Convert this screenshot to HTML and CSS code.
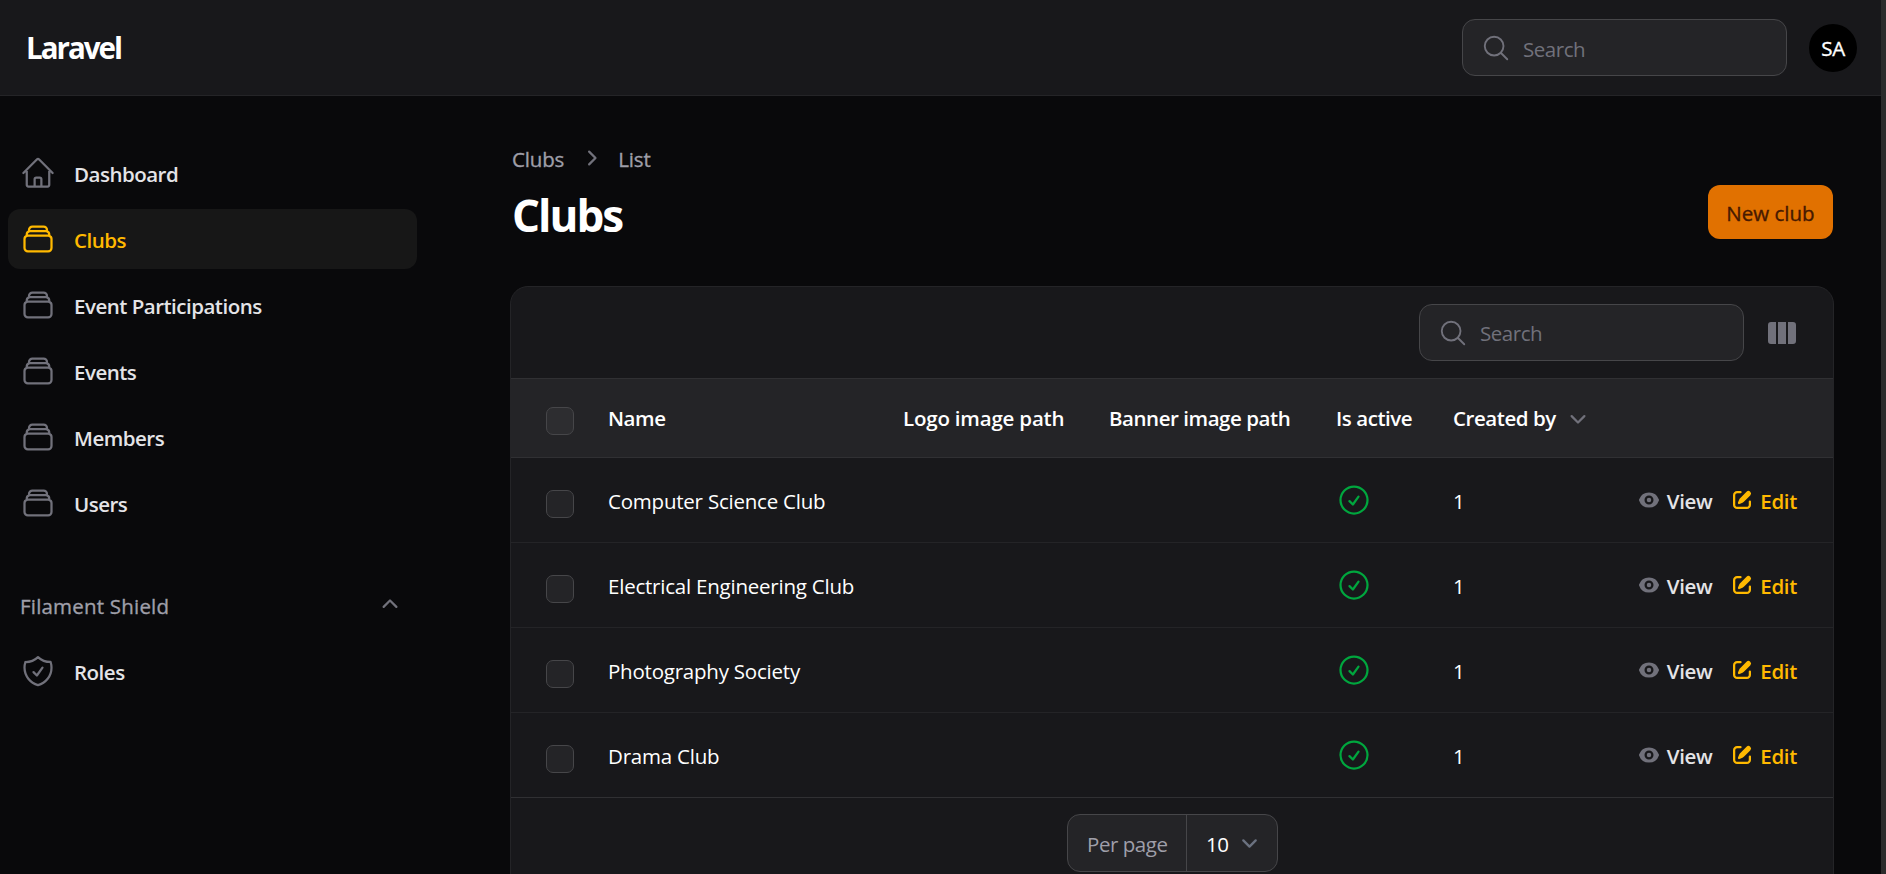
FILE: index.html
```html
<!DOCTYPE html>
<html lang="en">
<head>
<meta charset="utf-8">
<title>Clubs - Laravel</title>
<link rel="stylesheet" href="styles.css">
</head>
<body>
<svg class="sprite" aria-hidden="true">
  <symbol id="stack" viewBox="0 0 24 24"><path d="M6 6.878V6a2.25 2.25 0 0 1 2.25-2.25h7.5A2.25 2.25 0 0 1 18 6v.878m-12 0c.235-.083.487-.128.75-.128h10.5c.263 0 .515.045.75.128m-12 0A2.25 2.25 0 0 0 4.5 9v.878m13.5-3A2.25 2.25 0 0 1 19.5 9v.878m0 0a2.246 2.246 0 0 0-.75-.128H5.25c-.263 0-.515.045-.75.128m15 0A2.25 2.25 0 0 1 21 12v6a2.25 2.25 0 0 1-2.25 2.25H5.25A2.25 2.25 0 0 1 3 18v-6c0-.98.626-1.813 1.5-2.122"/></symbol>
  <symbol id="home" viewBox="0 0 24 24"><path d="m2.25 12 8.954-8.955c.44-.439 1.152-.439 1.591 0L21.75 12M4.5 9.75v10.125c0 .621.504 1.125 1.125 1.125H9.75v-4.875c0-.621.504-1.125 1.125-1.125h2.25c.621 0 1.125.504 1.125 1.125V21h4.125c.621 0 1.125-.504 1.125-1.125V9.75M8.25 21h8.25"/></symbol>
  <symbol id="shield" viewBox="0 0 24 24"><path d="M9 12.75 11.25 15 15 9.75m-3-7.036A11.959 11.959 0 0 1 3.598 6 11.99 11.99 0 0 0 3 9.749c0 5.592 3.824 10.29 9 11.623 5.176-1.332 9-6.03 9-11.622 0-1.31-.21-2.571-.598-3.751h-.152c-3.196 0-6.1-1.248-8.25-3.285Z"/></symbol>
  <symbol id="glass" viewBox="0 0 24 24"><path d="m21 21-5.197-5.197m0 0A7.5 7.5 0 1 0 5.196 5.196a7.5 7.5 0 0 0 10.607 10.607Z"/></symbol>
  <symbol id="check" viewBox="0 0 24 24"><path d="M9 12.75 11.25 15 15 9.75M21 12a9 9 0 1 1-18 0 9 9 0 0 1 18 0Z"/></symbol>
  <symbol id="up" viewBox="0 0 20 20"><path d="M9.47 6.47a.75.75 0 0 1 1.06 0l4.25 4.25a.75.75 0 1 1-1.06 1.06L10 8.06l-3.72 3.72a.75.75 0 0 1-1.06-1.06l4.25-4.25Z"/></symbol>
  <symbol id="right" viewBox="0 0 20 20"><path d="M8.22 5.22a.75.75 0 0 1 1.06 0l4.25 4.25a.75.75 0 0 1 0 1.06l-4.25 4.25a.75.75 0 0 1-1.06-1.06L11.94 10 8.22 6.28a.75.75 0 0 1 0-1.06Z"/></symbol>
  <symbol id="down" viewBox="0 0 20 20"><path d="M5.22 8.22a.75.75 0 0 1 1.06 0L10 11.94l3.72-3.72a.75.75 0 1 1 1.06 1.06l-4.25 4.25a.75.75 0 0 1-1.06 0L5.22 9.28a.75.75 0 0 1 0-1.06Z"/></symbol>
  <symbol id="eye" viewBox="0 0 16 16"><path d="M8 9.5a1.5 1.5 0 1 0 0-3 1.5 1.5 0 0 0 0 3Z"/><path fill-rule="evenodd" d="M1.38 8.28a.87.87 0 0 1 0-.566 7.003 7.003 0 0 1 13.238.006.87.87 0 0 1 0 .566A7.003 7.003 0 0 1 1.379 8.28ZM11 8a3 3 0 1 1-6 0 3 3 0 0 1 6 0Z"/></symbol>
  <symbol id="pencil" viewBox="0 0 16 16"><path d="M13.488 2.513a1.75 1.75 0 0 0-2.475 0L6.75 6.774a2.75 2.75 0 0 0-.596.892l-.848 2.047a.75.75 0 0 0 .98.98l2.047-.848a2.75 2.75 0 0 0 .892-.596l4.261-4.262a1.75 1.75 0 0 0 0-2.474Z"/><path d="M4.75 3.5c-.69 0-1.25.56-1.25 1.25v6.5c0 .69.56 1.25 1.25 1.25h6.5c.69 0 1.25-.56 1.25-1.25V9A.75.75 0 0 1 14 9v2.25A2.75 2.75 0 0 1 11.25 14h-6.5A2.75 2.75 0 0 1 2 11.25v-6.5A2.75 2.75 0 0 1 4.75 2H7a.75.75 0 0 1 0 1.5H4.75Z"/></symbol>
</svg>
<div class="app">
  <div class="page">
    <header class="topbar">
      <div class="brand">Laravel</div>
      <div class="search"><svg class="line i30"><use href="#glass"/></svg><span class="t placeholder">Search</span></div>
      <div class="avatar"><span class="t">SA</span></div>
    </header>
    <div class="body">
      <nav class="sidebar">
        <ul class="group">
          <li class="item"><svg class="line i36"><use href="#home"/></svg><span class="t">Dashboard</span></li>
          <li class="item active"><svg class="line i36"><use href="#stack"/></svg><span class="t">Clubs</span></li>
          <li class="item"><svg class="line i36"><use href="#stack"/></svg><span class="t">Event Participations</span></li>
          <li class="item"><svg class="line i36"><use href="#stack"/></svg><span class="t">Events</span></li>
          <li class="item"><svg class="line i36"><use href="#stack"/></svg><span class="t">Members</span></li>
          <li class="item"><svg class="line i36"><use href="#stack"/></svg><span class="t">Users</span></li>
        </ul>
        <ul class="group">
          <li class="label"><span class="t">Filament Shield</span><svg class="solid i30"><use href="#up"/></svg></li>
          <li class="item"><svg class="line i36"><use href="#shield"/></svg><span class="t">Roles</span></li>
        </ul>
      </nav>
      <main class="main">
        <div class="heading">
          <div>
            <div class="crumbs"><span class="t">Clubs</span><svg class="solid i30"><use href="#right"/></svg><span class="t">List</span></div>
            <h1>Clubs</h1>
          </div>
          <button class="new"><span class="t">New club</span></button>
        </div>
        <section class="card">
          <div class="tools">
            <div class="search"><svg class="line i30"><use href="#glass"/></svg><span class="t placeholder">Search</span></div>
            <svg class="columns" viewBox="0 0 28 22"><path d="M3 0H8V22H3A3 3 0 0 1 0 19V3A3 3 0 0 1 3 0ZM10 0H18V22H10ZM20 0H25A3 3 0 0 1 28 3V19A3 3 0 0 1 25 22H20Z"/></svg>
          </div>
          <table>
            <colgroup><col class="c-check"><col class="c-name"><col class="c-logo"><col class="c-banner"><col class="c-active"><col class="c-by"><col></colgroup>
            <thead>
              <tr><th><i class="box"></i></th><th><span class="t">Name</span></th><th class="logo"><span class="t">Logo image path</span></th><th><span class="t">Banner image path</span></th><th><span class="t">Is active</span></th><th><div class="sort"><span class="t">Created by</span><svg class="solid i30"><use href="#down"/></svg></div></th><th></th></tr>
            </thead>
            <tbody>
              <tr><td><i class="box"></i></td><td><span class="t">Computer Science Club</span></td><td></td><td></td><td><svg class="line i36 ok"><use href="#check"/></svg></td><td><span class="t">1</span></td><td><div class="actions"><a class="view"><svg class="solid i24"><use href="#eye"/></svg><span class="t">View</span></a><a class="edit"><svg class="solid i24"><use href="#pencil"/></svg><span class="t">Edit</span></a></div></td></tr>
              <tr><td><i class="box"></i></td><td><span class="t">Electrical Engineering Club</span></td><td></td><td></td><td><svg class="line i36 ok"><use href="#check"/></svg></td><td><span class="t">1</span></td><td><div class="actions"><a class="view"><svg class="solid i24"><use href="#eye"/></svg><span class="t">View</span></a><a class="edit"><svg class="solid i24"><use href="#pencil"/></svg><span class="t">Edit</span></a></div></td></tr>
              <tr><td><i class="box"></i></td><td><span class="t">Photography Society</span></td><td></td><td></td><td><svg class="line i36 ok"><use href="#check"/></svg></td><td><span class="t">1</span></td><td><div class="actions"><a class="view"><svg class="solid i24"><use href="#eye"/></svg><span class="t">View</span></a><a class="edit"><svg class="solid i24"><use href="#pencil"/></svg><span class="t">Edit</span></a></div></td></tr>
              <tr><td><i class="box"></i></td><td><span class="t">Drama Club</span></td><td></td><td></td><td><svg class="line i36 ok"><use href="#check"/></svg></td><td><span class="t">1</span></td><td><div class="actions"><a class="view"><svg class="solid i24"><use href="#eye"/></svg><span class="t">View</span></a><a class="edit"><svg class="solid i24"><use href="#pencil"/></svg><span class="t">Edit</span></a></div></td></tr>
            </tbody>
          </table>
          <div class="foot">
            <div class="perpage"><span class="t per">Per page</span><div class="num"><span class="t">10</span><svg class="caret" viewBox="0 0 20 20"><path d="m6 8 4 4 4-4"/></svg></div></div>
          </div>
        </section>
      </main>
    </div>
  </div>
  <div class="scrollbar"></div>
</div>
</body>
</html>
```
FILE: styles.css
```css
* { box-sizing: border-box; }
body { margin: 0; background: #09090b; color: #fff; font: 400 20.5px/30px "Open Sans", "Noto Sans", sans-serif; letter-spacing: -0.45px; overflow: hidden; }
ul { list-style: none; margin: 0; padding: 0; }
svg { display: block; flex: none; }
.sprite { position: absolute; width: 0; height: 0; }
.t { display: block; padding-top: 2px; white-space: nowrap; }
.line { fill: none; stroke: currentColor; stroke-width: 1.5; stroke-linecap: round; stroke-linejoin: round; color: #71717b; }
.solid { fill: #71717b; }
.i24 { width: 24px; height: 24px; }
.i30 { width: 30px; height: 30px; }
.i36 { width: 36px; height: 36px; }

.app { display: flex; height: 874px; overflow: hidden; }
.page { flex: 1; min-width: 0; }
.scrollbar { width: 5px; background: #2c2c2c; }

.topbar { display: flex; align-items: center; height: 96px; padding: 0 24px 0 26px; background: #18181b; border-bottom: 1px solid #242427; }
.brand { flex: 1; font-size: 29.5px; font-weight: 700; letter-spacing: -2px; padding-top: 1px; }
.search { display: flex; align-items: center; gap: 12px; width: 325px; height: 57px; padding-left: 18px; border: 1px solid #464649; border-radius: 13px; background: #242427; }
.placeholder { color: #71717b; }
.topbar .search { margin-right: 22px; }
.topbar .placeholder { padding-top: 3px; }
.avatar { display: flex; align-items: center; justify-content: center; width: 48px; height: 48px; border-radius: 50%; background: #000; }
.avatar .t { padding: 0; -webkit-text-stroke: 0.35px; }

.body { display: flex; }
.sidebar { width: 417px; padding: 47px 0 0 8px; font-weight: 600; color: #e4e4e7; letter-spacing: -0.5px; }
.group { display: flex; flex-direction: column; gap: 6px; margin-bottom: 42px; }
.item { display: flex; align-items: center; gap: 18px; height: 60px; padding-left: 12px; border-radius: 12px; }
.active { background: #171717; color: #ffb900; }
.active .line { color: #ffb900; }
.label { display: flex; align-items: center; justify-content: space-between; height: 60px; padding: 0 12px; color: #9f9fa9; font-weight: 400; letter-spacing: 0.2px; -webkit-text-stroke: 0.35px; }

.main { flex: 1; min-width: 0; padding: 47px 47px 0 93px; }
.heading { display: flex; justify-content: space-between; height: 143px; }
.crumbs { display: flex; align-items: center; gap: 12px; height: 30px; color: #9f9fa9; letter-spacing: -0.15px; padding-left: 2px; -webkit-text-stroke: 0.35px; }
.crumbs .solid, .label .solid { stroke-width: 0; }
h1 { margin: 15px 0 0 2px; font-size: 44px; line-height: 54px; font-weight: 700; letter-spacing: -2px; }
.new { width: 125px; height: 54px; margin: 42px 1px 0 0; padding: 0; border: 0; border-radius: 12px; background: #e17100; color: #461901; font: inherit; letter-spacing: 0; -webkit-text-stroke: 0.35px; }
.card { height: 640px; border: 1px solid #242427; border-radius: 18px; background: #18181b; overflow: hidden; }
.tools { display: flex; align-items: center; justify-content: flex-end; gap: 24px; height: 92px; padding-right: 37px; border-bottom: 1px solid #303033; }
.columns { width: 28px; height: 22px; fill: #71717b; }
.tools .placeholder { padding-top: 1px; }

table { width: 100%; table-layout: fixed; border-spacing: 0; letter-spacing: -0.22px; }
.c-check { width: 79px; }
.c-name { width: 295px; }
.c-logo { width: 206px; }
.c-banner { width: 227px; }
.c-active { width: 117px; }
.c-by { width: 160px; }
th, td { padding: 0 0 0 18px; text-align: left; vertical-align: middle; border-bottom: 1px solid #242427; }
th { height: 79px; background: #242427; font-weight: 600; letter-spacing: -0.45px; border-color: #303033; }
th .t { padding-top: 0; }
.logo { letter-spacing: -0.2px; }
td { height: 85px; }
th:first-child, td:first-child { padding: 6px 0 0 35px; }
td:first-child { padding-top: 8px; }
tbody tr:last-child td { border-color: #303033; }
.box { display: block; width: 28px; height: 28px; border: 1px solid #464649; border-radius: 7px; background: #242427; }
th .box { background: #2d2d30; }
.sort { display: flex; align-items: center; gap: 7px; }
.ok { color: #00a63e; }
.actions { display: flex; justify-content: flex-end; gap: 18px; padding-right: 36px; font-weight: 600; letter-spacing: -0.35px; }
.actions a { display: flex; align-items: center; gap: 6px; }
.view { color: #e4e4e7; }
.edit { color: #ffb900; }
.edit .solid { fill: #ffb900; }

.foot { display: flex; justify-content: center; padding: 16px 0 0 1px; }
.perpage { display: flex; width: 211px; height: 58px; border: 1px solid #464649; border-radius: 13px; background: #242427; }
.perpage > * { display: flex; align-items: center; }
.per { width: 119px; padding-left: 19px; color: #9f9fa9; border-right: 1px solid #464649; }
.num { padding-left: 19px; gap: 5px; }
.caret { width: 31px; height: 31px; fill: none; stroke: #6b7280; stroke-width: 1.5; stroke-linecap: round; stroke-linejoin: round; }
```
